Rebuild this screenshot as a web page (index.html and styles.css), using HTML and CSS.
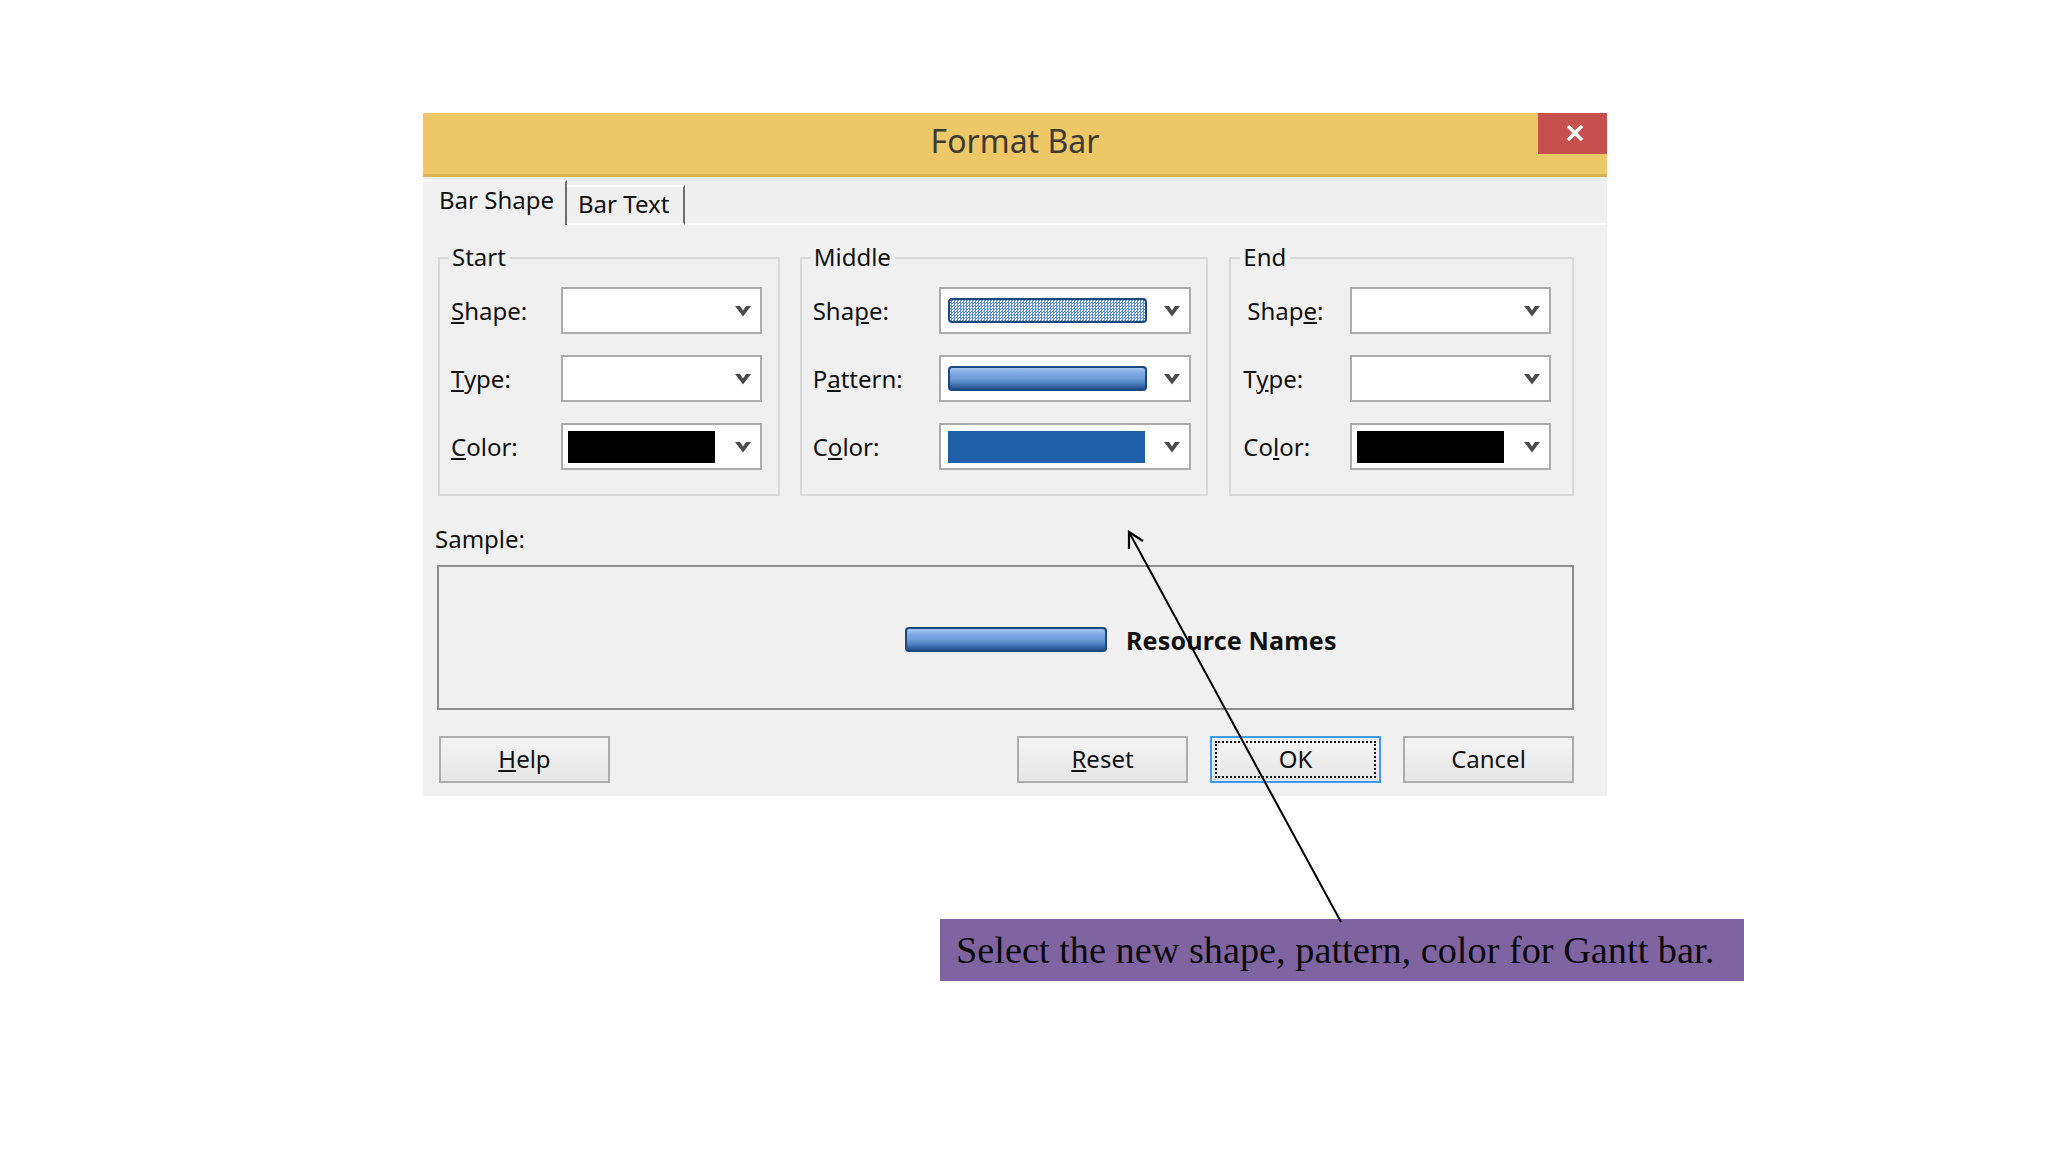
FILE: index.html
```html
<!DOCTYPE html>
<html lang="en">
<head>
<meta charset="utf-8">
<title>Format Bar</title>
<link rel="stylesheet" href="styles.css">
</head>
<body>
<div class="page">
  <div class="dialog">
    <div class="titlebar">
      <div class="title-spacer"></div>
      <div class="title">Format Bar</div>
      <div class="close">
        <svg width="20" height="16" viewBox="0 0 20 16"><path d="M3 1 L17 15 M17 1 L3 15" stroke="#fff" stroke-width="3.6" fill="none"/></svg>
      </div>
    </div>
    <div class="tabs">
      <div class="tab active">Bar Shape</div>
      <div class="tab">Bar Text</div>
      <div class="tab-fill"></div>
    </div>
    <div class="panel">
      <div class="groups">
        <div class="group group-start">
          <span class="group-title">Start</span>
          <div class="rows rows-start">
            <span class="lbl"><u>S</u>hape:</span>
            <div class="dd"><span class="dd-fill"></span><svg class="chev" width="18" height="14" viewBox="0 0 18 14"><polygon points="1,2 6,2 9,6.5 12,2 17,2 9,12.5" fill="#4a4a4a"/></svg></div>
            <span class="lbl"><u>T</u>ype:</span>
            <div class="dd"><span class="dd-fill"></span><svg class="chev" width="18" height="14" viewBox="0 0 18 14"><polygon points="1,2 6,2 9,6.5 12,2 17,2 9,12.5" fill="#4a4a4a"/></svg></div>
            <span class="lbl"><u>C</u>olor:</span>
            <div class="dd"><span class="swatch black"></span><svg class="chev" width="18" height="14" viewBox="0 0 18 14"><polygon points="1,2 6,2 9,6.5 12,2 17,2 9,12.5" fill="#4a4a4a"/></svg></div>
          </div>
        </div>
        <div class="group group-middle">
          <span class="group-title">Middle</span>
          <div class="rows rows-middle">
            <span class="lbl">Sha<u>p</u>e:</span>
            <div class="dd"><span class="barshape dither"></span><svg class="chev" width="18" height="14" viewBox="0 0 18 14"><polygon points="1,2 6,2 9,6.5 12,2 17,2 9,12.5" fill="#4a4a4a"/></svg></div>
            <span class="lbl">P<u>a</u>ttern:</span>
            <div class="dd"><span class="barshape solid"></span><svg class="chev" width="18" height="14" viewBox="0 0 18 14"><polygon points="1,2 6,2 9,6.5 12,2 17,2 9,12.5" fill="#4a4a4a"/></svg></div>
            <span class="lbl">C<u>o</u>lor:</span>
            <div class="dd"><span class="swatch blue"></span><svg class="chev" width="18" height="14" viewBox="0 0 18 14"><polygon points="1,2 6,2 9,6.5 12,2 17,2 9,12.5" fill="#4a4a4a"/></svg></div>
          </div>
        </div>
        <div class="group group-end">
          <span class="group-title">End</span>
          <div class="rows rows-end">
            <span class="lbl lbl-shift">Shap<u>e</u>:</span>
            <div class="dd"><span class="dd-fill"></span><svg class="chev" width="18" height="14" viewBox="0 0 18 14"><polygon points="1,2 6,2 9,6.5 12,2 17,2 9,12.5" fill="#4a4a4a"/></svg></div>
            <span class="lbl">T<u>y</u>pe:</span>
            <div class="dd"><span class="dd-fill"></span><svg class="chev" width="18" height="14" viewBox="0 0 18 14"><polygon points="1,2 6,2 9,6.5 12,2 17,2 9,12.5" fill="#4a4a4a"/></svg></div>
            <span class="lbl">Co<u>l</u>or:</span>
            <div class="dd"><span class="swatch black"></span><svg class="chev" width="18" height="14" viewBox="0 0 18 14"><polygon points="1,2 6,2 9,6.5 12,2 17,2 9,12.5" fill="#4a4a4a"/></svg></div>
          </div>
        </div>
      </div>
      <div class="sample-label">Sample:</div>
      <div class="sample">
        <span class="sample-bar"></span>
        <span class="sample-text">Resource Names</span>
      </div>
      <div class="buttons">
        <div class="btn"><u>H</u>elp</div>
        <div class="btn-spacer"></div>
        <div class="btn"><u>R</u>eset</div>
        <div class="btn btn-default">OK</div>
        <div class="btn">Cancel</div>
      </div>
    </div>
  </div>
  <div class="callout">Select the new shape, pattern, color for Gantt bar.</div>
  <svg class="arrow" width="2048" height="1152" viewBox="0 0 2048 1152">
    <line x1="1341" y1="922" x2="1129" y2="532" stroke="#000" stroke-width="2"/>
    <polyline points="1143,541 1129,532 1129,549" stroke="#000" stroke-width="2.2" fill="none"/>
  </svg>
</div>
</body>
</html>
```
FILE: styles.css
```css
* { box-sizing: border-box; }
html, body { margin: 0; padding: 0; background: #fff; }
.page {
  position: relative;
  width: 2048px;
  height: 1152px;
  padding-top: 113px;
  overflow: hidden;
}
.dialog {
  margin-left: 423px;
  width: 1184px;
  background: #f0f0f0;
  font-family: "Noto Sans", "Open Sans", sans-serif;
  font-size: 24px;
  color: #111;
}
.titlebar {
  display: grid;
  grid-template-columns: 69px 1fr 69px;
  height: 64px;
  background: #eec766;
  border-bottom: 3px solid #d9b052;
}
.title {
  text-align: center;
  font-size: 32px;
  line-height: 56px;
  color: #3d3a35;
}
.close {
  height: 41px;
  background: #c74f4e;
  display: flex;
  align-items: center;
  justify-content: center;
  padding-left: 5px;
  padding-bottom: 2px;
}
.tabs {
  display: flex;
  align-items: flex-end;
  height: 48px;
  background: #efefef;
}
.tab {
  height: 40px;
  width: 118px;
  padding-left: 11px;
  line-height: 34px;
  border-top: 2px solid #fbfbfb;
  border-right: 2px solid #707070;
  border-bottom: 2px solid #fbfbfb;
  white-space: nowrap;
}
.tab.active {
  height: 45px;
  width: 144px;
  padding-left: 16px;
  line-height: 36px;
  border-bottom: none;
  background: #f0f0f0;
}
.tab-fill {
  flex: 1;
  border-bottom: 2px solid #fbfbfb;
}
.panel {
  padding: 32px 33px 13px 14px;
}
.groups {
  display: flex;
  gap: 20px;
  padding-left: 1px;
}
.group {
  position: relative;
  height: 239px;
  border: 2px solid #d9d9d9;
  padding-top: 28px;
}
.group-start { width: 342px; padding-left: 11px; }
.group-middle { width: 409px; padding-left: 11px; }
.group-end { width: 345px; padding-left: 12px; margin-left: 1px; }
.group-title {
  position: absolute;
  top: -17px;
  left: 9px;
  padding: 0 4px 0 3px;
  background: #f0f0f0;
  line-height: 30px;
}
.rows {
  display: grid;
  grid-auto-rows: 47px;
  row-gap: 21px;
  align-items: center;
}
.rows-start { grid-template-columns: 110px 201px; }
.rows-middle { grid-template-columns: 126px 252px; }
.rows-end { grid-template-columns: 107px 201px; }
.lbl { white-space: nowrap; line-height: 30px; }
.lbl-shift { padding-left: 4px; }
.dd {
  height: 47px;
  background: #fff;
  border: 2px solid #ababab;
  display: flex;
  align-items: center;
  padding: 0 8px 0 5px;
}
.dd-fill { flex: 1; }
.chev { margin-left: auto; flex: none; margin-top: 1px; }
.swatch { height: 32px; display: block; }
.swatch.black { width: 147px; background: #000; }
.swatch.blue { width: 197px; background: #1f5ea9; margin-left: 2px; }
.barshape {
  display: block;
  width: 199px;
  height: 25px;
  margin-left: 2px;
  border: 2px solid #1b477f;
  border-radius: 4px;
}
.barshape.dither {
  background: repeating-conic-gradient(#5d8fd4 0 25%, #eef4fc 0 50%) 0 0 / 3px 3px;
}
.barshape.solid, .sample-bar {
  background: linear-gradient(#a4c4ee 0%, #7eabe3 25%, #6e9cd8 50%, #4f80c2 72%, #3563a4 88%, #284f8a 100%);
}
.sample-label {
  margin-top: 28px;
  line-height: 30px;
  margin-left: -2px;
}
.sample {
  margin-top: 11px;
  height: 145px;
  border: 2px solid #8e8e8e;
  display: flex;
  align-items: center;
  padding-left: 466px;
  padding-top: 4px;
}
.sample-bar {
  display: block;
  width: 202px;
  height: 25px;
  border: 2px solid #1b477f;
  border-radius: 4px;
}
.sample-text {
  margin-left: 19px;
  font-weight: bold;
  font-size: 25px;
  letter-spacing: 0.2px;
  color: #111;
}
.buttons {
  display: flex;
  gap: 22px;
  margin-top: 26px;
  padding-left: 2px;
}
.btn-spacer { flex: 1; }
.btn {
  width: 171px;
  height: 47px;
  border: 2px solid #adadad;
  background: linear-gradient(#f4f4f4, #e6e6e6);
  text-align: center;
  line-height: 42px;
}
.btn-default {
  border-color: #3d9bf0;
  outline: 2px dotted #111;
  outline-offset: -7px;
}
.callout {
  margin-left: 940px;
  margin-top: 123px;
  width: 804px;
  height: 62px;
  background: #8064a2;
  font-family: "Liberation Serif", "Times New Roman", serif;
  font-size: 38.3px;
  line-height: 62px;
  padding-left: 16px;
  color: #0a0a0a;
  white-space: nowrap;
}
.arrow {
  position: absolute;
  left: 0;
  top: 0;
  pointer-events: none;
}
```
